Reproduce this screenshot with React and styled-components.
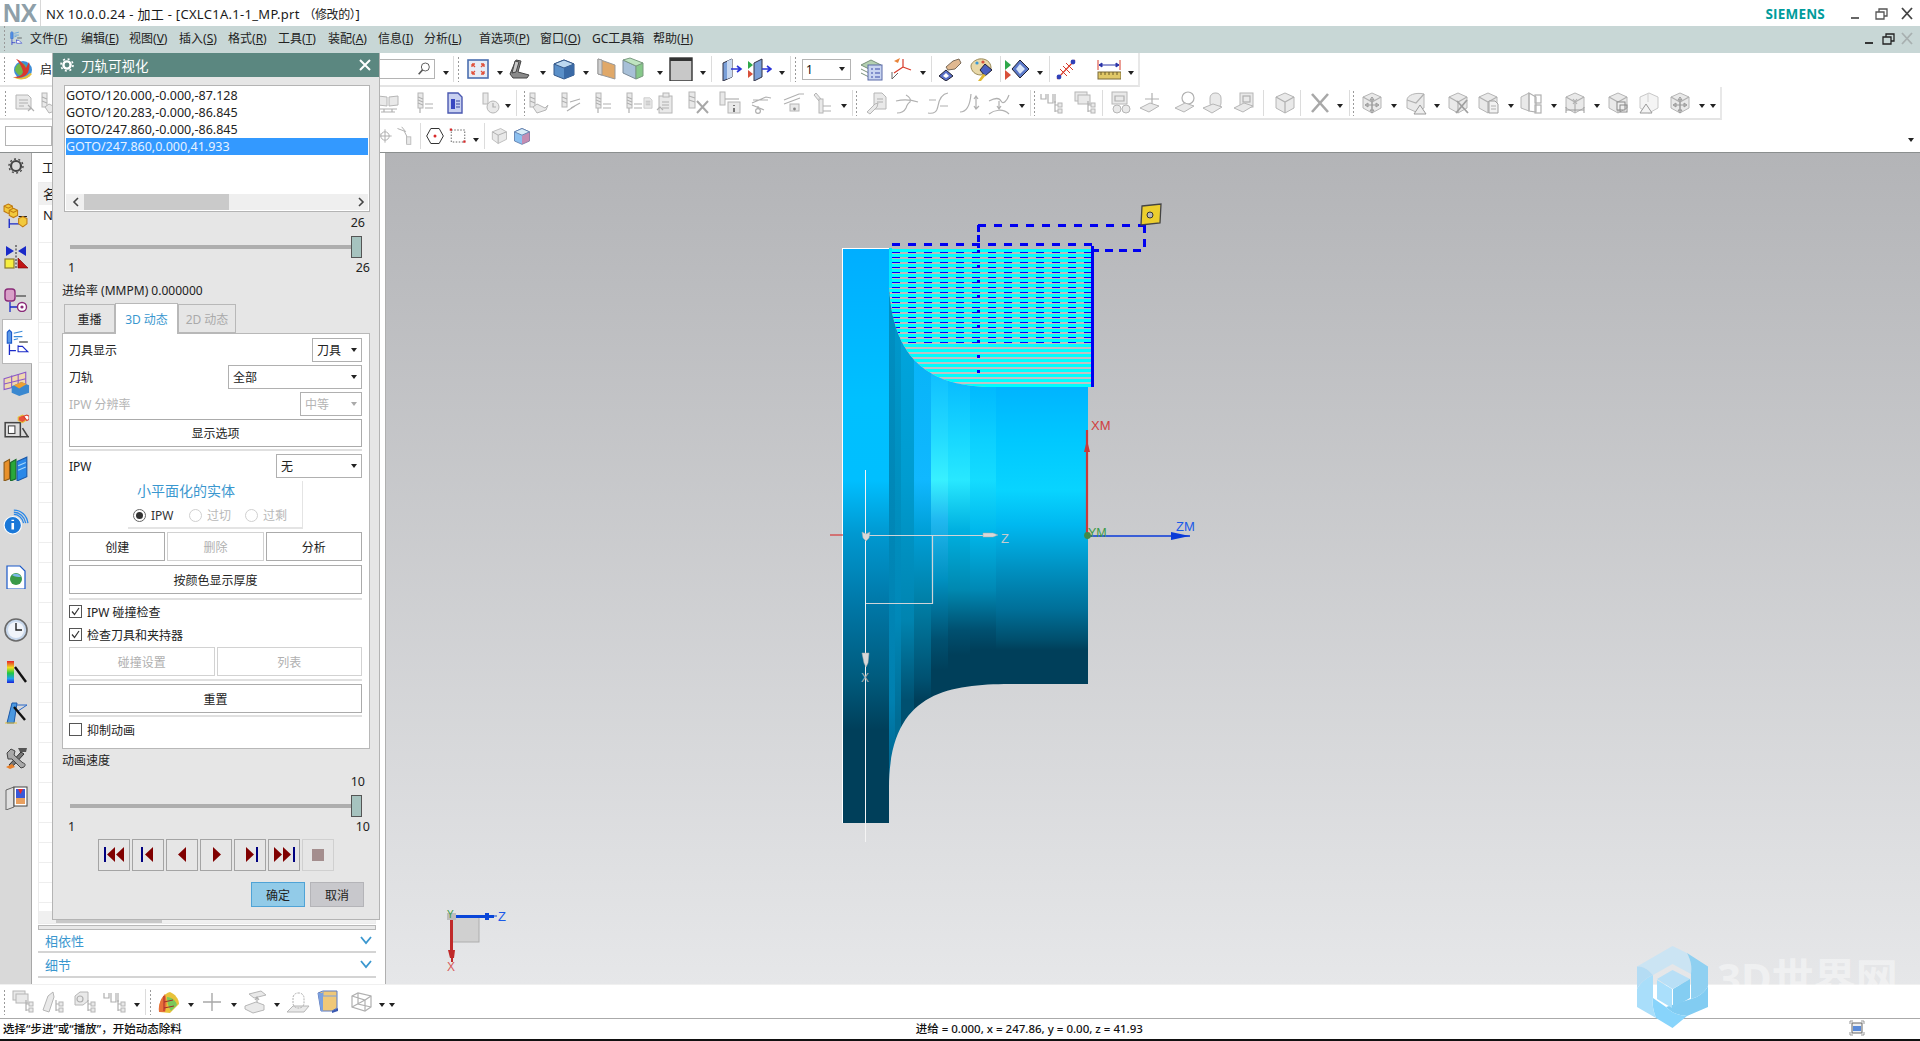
import React from "react";
import styled, { createGlobalStyle } from "styled-components";

const GlobalStyle = createGlobalStyle`
  html, body { margin: 0; padding: 0; background: #fff; overflow: hidden; }
  * { box-sizing: border-box; }
  body { font-family: "Noto Sans", "Noto Sans CJK SC", sans-serif; font-size: 12px; color: #222; }
`;

const Page = styled.div`
  position: relative;
  width: 1920px;
  height: 1041px;
  display: flex;
  flex-direction: column;
  overflow: hidden;
  background: #fff;
`;

/* title bar */
const TitleBar = styled.div`
  height: 26px;
  display: flex;
  align-items: center;
  padding-left: 3px;
  background: #fff;
`;
const Logo = styled.div`
  width: 38px;
  height: 26px;
  font: bold 25px/26px "Liberation Sans", sans-serif;
  color: #8e9fa9;
  letter-spacing: -0.5px;
  border-right: 1px solid #d8d8d8;
`;
const TitleText = styled.div`
  margin-left: 5px;
  font-size: 13px;
  letter-spacing: 0.3px;
  color: #1a1a1a;
  white-space: pre;
`;
const TitleState = styled.span`
  font-size: 12px;
  letter-spacing: -0.4px;
`;
const Siemens = styled.div`
  margin-left: auto;
  margin-right: 25px;
  padding-top: 1px;
  font: bold 13.5px "Open Sans", sans-serif;
  letter-spacing: 0.2px;
  color: #009c9c;
`;
const WinButtons = styled.div`
  display: flex;
  align-items: center;
  gap: ${(p) => p.$gap}px;
  margin-left: ${(p) => p.$auto ? "auto" : "0"};
  margin-right: ${(p) => p.$right}px;
`;

/* menu bar */
const MenuBar = styled.div`
  height: 27px;
  display: flex;
  align-items: center;
  background: #c8d7d6;
  padding: 0 0 3px 3px;
`;
const MenuIcon = styled.span`
  width: 14px;
  margin: 0 7px 0 3px;
  display: flex;
`;
const MenuItem = styled.span`
  width: ${(p) => p.$w}px;
  flex: none;
  font-size: 12px;
  white-space: nowrap;
  color: #222;
  u { text-underline-offset: 1px; }
`;

/* toolbars */
const ToolRow = styled.div`
  height: ${(p) => p.$h}px;
  width: ${(p) => p.$w}px;
  flex: none;
  display: flex;
  align-items: center;
  ${(p) => p.$edge && "border-right: 2px solid #e8e8e8; border-bottom: 2px solid #e4e4e4;"}
`;
const Slot = styled.div`
  flex: none;
  display: flex;
  align-items: center;
  justify-content: center;
  height: 100%;
`;
const Grip = styled.div`
  width: 3px;
  height: 26px;
  background: radial-gradient(circle, #9a9a9a 0.9px, transparent 1.1px) 0 0 / 3px 4px;
`;
const Sep = styled.div`
  width: 1px;
  height: 26px;
  background: #dcdcdc;
`;
const Caret = styled.div`
  width: 0;
  height: 0;
  margin-top: ${(p) => p.$down || 0}px;
  border-left: 3.5px solid transparent;
  border-right: 3.5px solid transparent;
  border-top: 4px solid #222;
`;
const Field = styled.div`
  height: 20px;
  width: ${(p) => p.$w}px;
  border: 1px solid #b4b4b4;
  background: #fff;
  display: flex;
  align-items: center;
  justify-content: space-between;
  padding: 0 2px 0 3px;
`;
const LayerCombo = styled(Field)`
  height: 21px;
  border-width: 1.5px;
  color: #111;
  padding: 0 5px 0 3px;
`;
const TinyLabel = styled.span`
  font-size: 12px;
  white-space: nowrap;
`;

const GroundLine = styled.div`
  height: 1px;
  flex: none;
  background: #8b8f8f;
`;

/* work area */
const Work = styled.div`
  flex: 1;
  min-height: 0;
  display: flex;
`;
const Rail = styled.div`
  width: 32px;
  flex: none;
  background: #d9d9d9;
  border-right: 1px solid #a8a8a8;
  display: flex;
  flex-direction: column;
  align-items: center;
  padding-top: 1px;
`;
const RailTab = styled.div`
  height: ${(p) => p.$h}px;
  width: ${(p) => (p.$active ? 30 : 31)}px;
  margin-left: ${(p) => (p.$active ? 2 : 0)}px;
  margin-top: ${(p) => p.$mt || 0}px;
  flex: none;
  display: flex;
  align-items: center;
  justify-content: center;
  background: ${(p) => (p.$active ? "#fff" : "transparent")};
  ${(p) => p.$active && "border: 1px solid #b8b8b8; border-right: none;"}
`;
const Nav = styled.div`
  width: 354px;
  flex: none;
  background: #fff;
  border-right: 1px solid #b0b0b0;
  display: flex;
  flex-direction: column;
  padding: 0 9px 6px 6px;
`;
const NavHead = styled.div`
  height: 29px;
  padding: 4px 0 0 4px;
  font-size: 13px;
`;
const NavTable = styled.div`
  flex: 1;
  min-height: 0;
  border: 1px solid #ececec;
  display: flex;
  flex-direction: column;
  background: repeating-linear-gradient(#fff 0 19px, #eeeeee 19px 20px);
`;
const NavColumn = styled.div`
  height: 22px;
  background: #f0f0f0;
  padding-left: 4px;
  font-size: 13px;
  line-height: 22px;
`;
const NavRow = styled.div`
  height: 20px;
  padding-left: 4px;
  font-size: 13px;
  line-height: 20px;
  background: #fff;
`;
const NavScroll = styled.div`
  margin-top: auto;
  height: 12px;
  background: #f0f0f0;
  display: flex;
  align-items: flex-end;
`;
const NavThumb = styled.div`
  width: 106px;
  height: 3px;
  margin-left: 17px;
  background: #c8c8c8;
`;
const NavDivider = styled.div`
  height: 5px;
  margin-top: 1px;
  border: 1px solid #b8b8b8;
  background: #e8e8e8;
`;
const Accordion = styled.div`
  height: ${(p) => p.$h}px;
  display: flex;
  align-items: center;
  justify-content: space-between;
  padding: 0 4px 0 7px;
  font-size: 13px;
  color: #3a97cf;
  border-bottom: 2px solid #d4d4d4;
`;

const Viewport = styled.div`
  position: relative;
  flex: 1;
  min-width: 0;
  background: linear-gradient(#b3b4b7, #e6e7e9);
`;
const Scene = styled.svg`
  display: block;
  width: 100%;
  height: 100%;
`;

const BottomBar = styled(ToolRow)`
  width: 100%;
  background: #fff;
  border-top: 1px solid #f0f0f0;
`;
const StatusBar = styled.div`
  height: 23px;
  flex: none;
  border-top: 1px solid #aaa;
  border-bottom: 2px solid #111;
  display: flex;
  align-items: center;
  padding: 0 0 2px 3px;
  font-size: 11.5px;
  font-weight: 500;
  color: #111;
`;
const StatusCenter = styled.span`
  margin-left: 734px;
  white-space: pre;
`;
const StatusIcon = styled.span`
  margin-left: auto;
  margin-right: 55px;
  display: flex;
`;

/* dialog */
const Dialog = styled.div`
  position: absolute;
  left: 52px;
  top: 53px;
  width: 328px;
  height: 867px;
  background: #e6e6e6;
  border: 1px solid #b4b4b4;
  border-top: none;
  display: flex;
  flex-direction: column;
`;
const DialogTitle = styled.div`
  height: 24px;
  flex: none;
  background: #5b8780;
  display: flex;
  align-items: center;
  padding: 0 8px 0 7px;
  color: #fff;
  font-size: 13.5px;
  gap: 7px;
`;
const DialogClose = styled.span`
  margin-left: auto;
  display: flex;
`;
const DialogBody = styled.div`
  padding: 8px 9px 0 9px;
  flex: 1;
  display: flex;
  flex-direction: column;
`;
const ListBox = styled.div`
  margin-left: 2px;
  width: 306px;
  height: 127px;
  flex: none;
  border: 1px solid #b4b4b4;
  background: #fff;
  padding: 1px 1px 1px;
  display: flex;
  flex-direction: column;
`;
const ListLine = styled.div`
  height: 17px;
  line-height: 17px;
  font-size: 12.5px;
  white-space: nowrap;
  color: ${(p) => (p.$sel ? "#e8f2ff" : "#222")};
  background: ${(p) => (p.$sel ? "#3399ff" : "transparent")};
`;
const HScroll = styled.div`
  margin-top: auto;
  height: 16px;
  background: #efefef;
  display: flex;
  align-items: center;
  justify-content: space-between;
  padding: 0 3px 0 6px;
  position: relative;
`;
const HThumb = styled.div`
  position: absolute;
  left: 18px;
  top: 0;
  bottom: 0;
  width: 145px;
  background: #cacaca;
`;
const SliderValue = styled.div`
  margin-top: ${(p) => p.$mt}px;
  height: 16px;
  line-height: 16px;
  text-align: right;
  padding-right: 5px;
  font-size: 12.5px;
`;
const SliderArea = styled.div`
  position: relative;
  margin: 5px 8px 0 8px;
  height: 22px;
  display: flex;
  align-items: center;
`;
const SliderTrack = styled.div`
  width: 100%;
  height: 4px;
  background: #aeaeae;
`;
const SliderThumb = styled.div`
  position: absolute;
  right: 0;
  top: 0;
  width: 11px;
  height: 22px;
  background: #a6c3bf;
  border: 1px solid #555;
`;
const SliderEnds = styled.div`
  margin-top: 2px;
  height: 16px;
  line-height: 16px;
  display: flex;
  justify-content: space-between;
  padding-left: 6px;
  font-size: 12.5px;
`;
const Caption = styled.div`
  margin-top: ${(p) => p.$mt}px;
  height: 16px;
  line-height: 16px;
  font-size: 12px;
  white-space: nowrap;
`;
const Tabs = styled.div`
  margin-top: 5px;
  margin-left: 2px;
  height: 30px;
  display: flex;
  align-items: flex-end;
  position: relative;
  z-index: 1;
  margin-bottom: -1px;
`;
const Tab = styled.div`
  width: ${(p) => p.$w}px;
  height: ${(p) => (p.$active ? 31 : 29)}px;
  margin-bottom: ${(p) => (p.$active ? 0 : 1)}px;
  display: flex;
  align-items: center;
  justify-content: center;
  font-size: 12px;
  border: 1px solid #b8b8b8;
  ${(p) => (p.$active ? "border-bottom: none; background: #fff; color: #3a97cf;" : "background: #e6e6e6;")}
  ${(p) => p.$off && "color: #aaa;"}
`;
const TabPanel = styled.div`
  height: 416px;
  flex: none;
  background: #fff;
  border: 1px solid #b8b8b8;
  padding: 4px 7px 0 6px;
  display: flex;
  flex-direction: column;
`;
const FormRow = styled.div`
  height: 24px;
  flex: none;
  margin-top: ${(p) => p.$mt || 0}px;
  display: flex;
  align-items: center;
  justify-content: space-between;
  font-size: 12px;
  color: ${(p) => (p.$off ? "#b4b4b4" : "#222")};
`;
const Select = styled.div`
  width: ${(p) => p.$w}px;
  height: 24px;
  border: 1px solid #b0b0b0;
  background: #fff;
  display: flex;
  align-items: center;
  justify-content: space-between;
  padding: 0 4px;
  font-size: 12px;
  color: ${(p) => (p.$off ? "#b4b4b4" : "#222")};
`;
const SelectCaret = styled.span`
  width: 0;
  height: 0;
  border-left: 3.5px solid transparent;
  border-right: 3.5px solid transparent;
  border-top: 4px solid ${(p) => (p.$off ? "#aaa" : "#222")};
`;
const WideButton = styled.div`
  flex: ${(p) => (p.$wide ? "1" : "none")};
  height: ${(p) => p.$h || 29}px;
  margin-top: ${(p) => p.$mt || 0}px;
  display: flex;
  align-items: center;
  justify-content: center;
  font-size: 12px;
  background: #fff;
  border: 1px solid ${(p) => (p.$off ? "#d2d2d2" : "#ababab")};
  color: ${(p) => (p.$off ? "#b0b0b0" : "#222")};
`;
const Rule = styled.div`
  height: 2px;
  flex: none;
  margin-top: ${(p) => p.$mt}px;
  background: #e0e0e0;
`;
const ButtonRow = styled.div`
  display: flex;
  flex: none;
  gap: 2px;
  margin-top: ${(p) => p.$mt || 0}px;
`;
const Facet = styled.div`
  margin: 3px 0 3px 59px;
  width: 175px;
  height: 48px;
  flex: none;
  border-right: 1px solid #e4e4e4;
  border-bottom: 2px solid #e4e4e4;
  display: flex;
  flex-direction: column;
  align-items: flex-start;
`;
const FacetTitle = styled.div`
  height: 19px;
  line-height: 19px;
  margin-left: 9px;
  font-size: 14px;
  white-space: nowrap;
  color: #3a97cf;
`;
const RadioRow = styled.div`
  margin: 6px 0 0 5px;
  display: flex;
`;
const RadioItem = styled.div`
  width: 56px;
  display: flex;
  align-items: center;
  gap: 5px;
  font-size: 12px;
  white-space: nowrap;
  color: ${(p) => (p.$off ? "#b8b8b8" : "#333")};
`;
const RadioDot = styled.span`
  width: 13px;
  height: 13px;
  flex: none;
  border-radius: 50%;
  border: 1px solid ${(p) => (p.$off ? "#d0d0d0" : "#666")};
  display: flex;
  align-items: center;
  justify-content: center;
  &::after {
    content: "";
    width: 7px;
    height: 7px;
    border-radius: 50%;
    background: ${(p) => (p.$off ? "transparent" : "#333")};
  }
`;
const CheckRow = styled.div`
  height: 23px;
  flex: none;
  margin-top: ${(p) => p.$mt || 0}px;
  display: flex;
  align-items: center;
  gap: 5px;
  font-size: 12px;
`;
const CheckBox = styled.span`
  width: 13px;
  height: 13px;
  border: 1px solid #555;
  background: #fff;
  display: flex;
`;
const Transport = styled.div`
  margin: 4px 0 0 36px;
  display: flex;
  gap: 2px;
`;
const TransportBtn = styled.div`
  width: 32px;
  height: 32px;
  display: flex;
  align-items: center;
  justify-content: center;
  border: 1px solid ${(p) => (p.$off ? "#d0d0d0" : "#a4a4a4")};
`;
const Footer = styled.div`
  margin-top: 11px;
  padding-right: 6px;
  display: flex;
  justify-content: flex-end;
  gap: 5px;
`;
const FootBtn = styled.div`
  width: 54px;
  height: 25px;
  display: flex;
  align-items: center;
  justify-content: center;
  font-size: 12px;
  background: ${(p) => (p.$primary ? "#92cbe8" : "#c8c8cc")};
  border: 1px solid ${(p) => (p.$primary ? "#4fa3d6" : "#b4b4b8")};
`;

/* watermark */
const Watermark = styled.div`
  position: absolute;
  left: 1637px;
  top: 946px;
  display: flex;
  align-items: flex-start;
  gap: 9px;
  pointer-events: none;
`;
const WatermarkText = styled.div`
  margin-top: 8px;
  font: bold 42px/48px "Noto Sans", "Noto Sans CJK SC", sans-serif;
  color: rgba(255, 255, 255, 0.42);
  white-space: nowrap;
`;

/* icon artwork, 24x24 */
const g = { fill: "#e9e9e9", stroke: "#b6b6b6", strokeWidth: 1 };
const gl = { fill: "none", stroke: "#b0b0b0", strokeWidth: 1.2 };
const cube = <><path d="M12 2l9 4v11l-9 5-9-5V6z" {...g} /><path d="M3 6l9 5 9-5M12 11v11" {...gl} /></>;
const sheet = <path d="M5 3h10l4 4v14H5z" {...g} />;
const tree = <path d="M15 10v11M15 14h3M15 20h3" {...gl} />;
const treeBoxes = <><rect x="18" y="12" width="4" height="4" {...g} /><rect x="18" y="18" width="4" height="4" {...g} /></>;
const yc = { fill: "#f2c93c", stroke: "#c07a10" };

const ICONS = {
  globe: <><circle cx="12" cy="13" r="9" fill="#3f8fd8" /><path d="M6 8c3-3 8-2 9 1s-3 5-4 8-4 1-6-2 0-5 1-7z" fill="#6fb84a" /><path d="M5 2c4 1 8 5 10 9l3-6c1 5 0 10-3 13-4 3-10 4-13 2 5 0 9-1 10-5C11 10 8 5 5 2z" fill="#d8392e" /><path d="M2 20c5 2 12 1 17-4l2 1c-4 6-13 7-19 3z" fill="#e8c23a" /></>,
  search: <><circle cx="14" cy="9" r="6" fill="#fff" stroke="#555" strokeWidth="1.4" /><path d="M10 13l-6 7" stroke="#555" strokeWidth="2.4" /></>,
  fit: <><rect x="2" y="3" width="20" height="18" fill="#e6ecf6" stroke="#4b6fb0" strokeWidth="1.6" /><path d="M6 7l3 3M6 7h3M6 7v3M18 7l-3 3M18 7h-3M18 7v3M6 17l3-3M6 17h3M6 17v-3M18 17l-3-3M18 17h-3M18 17v-3" stroke="#e0503a" strokeWidth="1.3" fill="none" /></>,
  orient: <><path d="M8 3l5 1-3 11 11 3-2 3H5l-3-4z" fill="#8a8a8a" stroke="#444" /><path d="M7 4l4 1-3 10-4 1z" fill="#c8c8c8" stroke="#444" /></>,
  cubeBlue: <><path d="M12 3l10 4v11l-10 4L2 18V7z" fill="#5a8fc8" stroke="#35598a" /><path d="M2 7l10 4 10-4-10-4z" fill="#bcd8f0" stroke="#35598a" /><path d="M12 11v11l10-4V7z" fill="#3a6aa6" /></>,
  wall: <><path d="M3 2l17 6v14L3 17z" fill="#e0a868" stroke="#999" /><path d="M3 2l4 1v15l-4-1z" fill="#d0d0d0" stroke="#999" /></>,
  cubeGreen: <><path d="M2 3l13 6v13L2 16z" fill="#a8c0d8" stroke="#7a8a98" /><path d="M15 9l7-3v13l-7 3z" fill="#86c88a" stroke="#7a9a80" /><path d="M2 3l7-2 13 5-7 3z" fill="#bfe4c0" stroke="#7a9a80" /></>,
  pane: <><rect x="1" y="1" width="22" height="23" fill="#c8c8c8" stroke="#333" strokeWidth="1.4" /><rect x="1" y="1" width="22" height="3" fill="#333" /></>,
  planeA: <><path d="M3 6l9-4v18l-9 4z" fill="#7a9fd8" stroke="#334" /><path d="M7 4l5-2v18l-5 2z" fill="#c8d8f0" /><path d="M11 12h10M17 9l4 3-4 3" stroke="#2a34d8" strokeWidth="1.6" fill="none" /></>,
  planeB: <><path d="M0 4l5 4-5 4z" fill="#2fa84a" /><path d="M0 13l5 4-5 4z" fill="#d8503a" /><path d="M6 6l8-4v18l-8 4z" fill="#7a9fd8" stroke="#334" /><path d="M14 12h9M19 9l4 3-4 3" stroke="#2a34d8" strokeWidth="1.6" fill="none" /></>,
  layers: <><path d="M2 8l10-5 10 5-10 5z" fill="#b4d0b0" stroke="#78907a" /><path d="M2 12l10 5 4-2M2 16l10 5 4-2" stroke="#7a907a" fill="none" /><rect x="9" y="8" width="14" height="15" fill="#c8d4f0" stroke="#5a6aa8" /><path d="M12 12h2M16 12h5M12 16h2M16 16h5M12 20h2M16 20h5" stroke="#3a4aa8" /></>,
  axes: <><path d="M14 10V2M14 10l8 3M14 10l-9 6" stroke="#d83a2a" fill="none" strokeWidth="1.2" /><path d="M5 4l6-3-2 5z" fill="#e8843a" /><path d="M3 22l6-6M3 22v-7" stroke="#666" fill="none" /></>,
  hand: <><path d="M8 10l7-6 6-2 2 4-6 6-7 1z" fill="#e0b890" stroke="#7a6a58" /><path d="M8 13l7 6-7 5-7-5z" fill="#5a70c8" stroke="#223" /><path d="M8 16l3 3-3 2-3-2z" fill="#fff" /></>,
  palette: <><path d="M10 2c7-1 12 3 12 9 0 3-3 3-5 3-3 0-2 4-5 4C6 18 2 14 2 9c0-3 4-6 8-7z" fill="#e8d8a8" stroke="#9a8a58" /><circle cx="8" cy="6" r="1.6" fill="#3a9ad8" /><circle cx="14" cy="5" r="1.6" fill="#d8503a" /><path d="M16 7l7 6-7 6-5-6z" fill="#4a60c0" stroke="#223" /><path d="M9 24l5-7 3 1-5 6z" fill="#e0b830" /></>,
  playDia: <><path d="M0 3l6 5-6 5z" fill="#2fa84a" /><path d="M0 13l6 5-6 5z" fill="#d8503a" /><path d="M15 3l9 9-9 9-8-9z" fill="#5a78c8" stroke="#223" /><path d="M15 7l5 5-5 5-4-5z" fill="#d8e4f8" /></>,
  diag: <><path d="M3 22L21 3" stroke="#d83a2a" strokeWidth="1.1" /><path d="M6 12l7 7M9 9l7 7M12 6l7 7" stroke="#d83a2a" /><circle cx="19" cy="5" r="2.4" fill="#3040b8" /><circle cx="5" cy="20" r="2.4" fill="#3040b8" /></>,
  ruler: <><path d="M1 3v10M23 3v10" stroke="#d83a2a" /><path d="M2 8h20M2 8l3-2v4zM22 8l-3-2v4z" stroke="#2a34a8" fill="#2a34a8" /><rect x="1" y="15" width="23" height="7" fill="#e0c868" stroke="#7a6a38" /><path d="M4 15v3M8 15v3M12 15v3M16 15v3M20 15v3" stroke="#6a5a28" /></>,
  hex: <><path d="M7 3h10l5 9-5 9H7l-5-9z" fill="#fff" stroke="#333" strokeWidth="1.2" /><circle cx="12" cy="12" r="1.8" fill="#d82a2a" /></>,
  dashRect: <><path d="M3 4h18v16H3z" fill="none" stroke="#333" strokeDasharray="2 2" /><rect x="1" y="2" width="3" height="3" fill="#d82a2a" /><rect x="19" y="18" width="3" height="3" fill="#d82a2a" /></>,
  colorCube: <><path d="M12 3l9 4v11l-9 4-9-4V7z" fill="#8cc0f0" stroke="#5a78a8" /><path d="M12 12l9-5v11l-9 4z" fill="#e86a8a" opacity=".6" /><path d="M3 7l9 4 9-4-9-4z" fill="#d8ecf8" stroke="#5a78a8" /></>,
  gDoc: <>{sheet}<path d="M8 9h8M8 12h8M8 15h8" {...gl} /></>,
  gBook: <><path d="M2 5l9 1v9l-9-1zM22 5l-9 1v9l9-1z" {...g} /><path d="M3 18h18M5 21h14M8 18v3M16 18v3" {...gl} /></>,
  gPaper: <><path d="M3 4h12l3 3v11H3z" {...g} /><path d="M6 9h9M6 12h9M6 15h5" {...gl} /><path d="M15 14l6 6M15 20l3-3" {...gl} /></>,
  gDrill: <><rect x="6" y="2" width="5" height="15" {...g} /><path d="M6 6l5 2M6 9l5 2M6 12l5 2" {...gl} /><path d="M13 13h8M13 17h8" {...gl} /><path d="M8 17v5" {...gl} /></>,
  gDrillClock: <><rect x="5" y="2" width="5" height="11" {...g} /><circle cx="15" cy="16" r="6" {...g} /><path d="M15 12v4h3" {...gl} /></>,
  docBlue: <><path d="M5 2h10l4 4v16H5z" fill="#c8d0f0" stroke="#4a58b0" strokeWidth="1.4" /><path d="M8 8h4v10H8z" fill="#3a48c0" /><path d="M13 10h4M13 13h4M13 16h4" stroke="#3a48a0" /></>,
  gWrench: <><rect x="3" y="2" width="5" height="14" {...g} /><path d="M3 6l5 2M3 10l5 2" {...gl} /><path d="M10 13l8 4 3-3-2 5-9 3-4-6z" {...g} /></>,
  gArrowTool: <><rect x="3" y="2" width="5" height="14" {...g} /><path d="M3 6l5 2M3 10l5 2" {...gl} /><path d="M11 11l10-3M12 17l9-5M8 20l8-5" {...gl} /></>,
  gClipDoc: <><rect x="4" y="5" width="13" height="17" {...g} /><rect x="8" y="2" width="6" height="4" {...g} /><path d="M7 11h7M7 14h7M7 17h7" {...gl} /><path d="M2 19l3-3 3 3" {...gl} /></>,
  gDrillX: <><rect x="2" y="1" width="6" height="16" {...g} /><path d="M2 5l6 2M2 9l6 2" {...gl} /><path d="M10 10l11 12M21 10L10 22" stroke="#a8a8a8" strokeWidth="2" /></>,
  gInfo: <><rect x="2" y="1" width="5" height="13" {...g} /><path d="M7 8h14" {...gl} /><rect x="10" y="11" width="12" height="11" {...g} /><path d="M16 14v1M16 17v4" stroke="#777" strokeWidth="2" /></>,
  gScissors: <><path d="M4 12l14-6 5 1M4 14l12 5M5 9h15" {...gl} /><circle cx="10" cy="20" r="2.4" {...gl} /><path d="M10 15v3" {...gl} /></>,
  gPress: <><path d="M3 9l15-6h5M3 13l16-6" {...gl} /><rect x="9" y="13" width="9" height="7" {...g} /><circle cx="13.5" cy="18" r="1.4" fill="#888" /></>,
  gMill: <><path d="M6 2l5 6-2 2-5-6z" {...g} /><rect x="9" y="8" width="4" height="14" {...g} /><path d="M13 15h8M13 20h8" {...gl} /></>,
  gDocWrench: <><path d="M9 2h8l4 4v12H9z" {...g} /><path d="M2 21l8-8 3-1-1 4-7 7z" {...g} /><path d="M12 8h6M12 11h6" {...gl} /></>,
  gCurveA: <path d="M1 10c8-2 16-1 22 1M2 22c5 0 8-3 9-5 1-3 2-5 4-6 1-2 0-5-4-7" {...gl} />,
  gCurveB: <><path d="M2 22c6 1 9-1 10-7s4-12 10-13" {...gl} /><path d="M3 9h7M14 15h8" {...gl} /></>,
  gCurveC: <><path d="M2 21c7 0 10-6 11-18" {...gl} /><path d="M18 6v11M16 8l2-3 2 3M21 15l-3 3-2-3" {...gl} /></>,
  gCurveD: <><path d="M2 10c6-3 10-4 12 0s6 0 8-6" {...gl} /><path d="M2 23c5-4 14-6 20 0" {...gl} /><path d="M12 10v7M10 15l2 3 2-3" {...gl} /></>,
  gWave: <><path d="M1 3v5h5V3M8 3v9h5V3M15 3v9" {...gl} />{tree}{treeBoxes}</>,
  gDocsTree: <><rect x="2" y="1" width="12" height="9" {...g} /><rect x="5" y="4" width="12" height="9" {...g} />{tree}{treeBoxes}</>,
  gToolTree: <><path d="M2 20l5-14 5-4 1 5-5 15z" {...g} />{tree}{treeBoxes}</>,
  gBoxTree: <><path d="M2 6l5-4h8v9l-5 4H2z" {...g} /><circle cx="7" cy="9" r="3" {...gl} />{tree}{treeBoxes}</>,
  gBino: <><rect x="4" y="1" width="15" height="12" {...g} /><circle cx="9" cy="18" r="4" {...g} /><circle cx="18" cy="18" r="4" {...g} /><path d="M7 5h9v5H7z" {...gl} /></>,
  gPlus: <><path d="M14 2v14M7 8h14" {...gl} /><path d="M2 17l10-5 9 3-10 6z" {...g} /></>,
  gCircleTag: <><circle cx="15" cy="7" r="6" {...gl} /><path d="M2 17l10-5 9 3-10 6z" {...g} /></>,
  gCyl: <><rect x="9" y="2" width="11" height="15" rx="5" {...g} /><path d="M2 17l10-4 9 3-10 6z" {...g} /></>,
  gBoxTag: <><rect x="8" y="2" width="13" height="14" {...g} /><rect x="11" y="5" width="7" height="6" {...gl} /><path d="M2 17l10-5 9 3-10 6z" {...g} /></>,
  gCube: cube,
  gX: <path d="M4 3l16 18M20 3L4 21" stroke="#a8a8a8" strokeWidth="2.6" />,
  gCubeMove: <>{cube}<path d="M12 8v12M6 14h12M12 6l-2 3h4zM12 22l-2-3h4zM5 14l3-2v4zM19 14l-3-2v4z" fill="#d8d8d8" stroke="#9a9a9a" /></>,
  gCubeTri: <><path d="M3 9c0-5 9-8 17-6v14l-8 4-9-4z" {...g} /><path d="M3 9l9 3 8-9" {...gl} /><path d="M16 14l6 9H10z" fill="#eee" stroke="#9a9a9a" /></>,
  gCubeX: <>{cube}<path d="M11 10l11 12M21 9L10 22" stroke="#a0a0a0" strokeWidth="1.8" /></>,
  gCubeDoc: <>{cube}<path d="M13 10h6l3 3v9h-9z" fill="#f2f2f2" stroke="#a0a0a0" /><path d="M15 15h5M15 18h5" {...gl} /></>,
  gCubeSplit: <><path d="M2 6l8-4v18l-8-3z" {...g} /><path d="M10 2l7 4v15l-7-1z" {...gl} /><rect x="16" y="4" width="6" height="8" {...gl} /><rect x="16" y="14" width="6" height="8" {...gl} /></>,
  gCubeDim: <>{cube}<path d="M3 19h18M3 16v6M21 16v6" stroke="#9a9a9a" /><path d="M10 8l4 5M14 8l-4 5" {...gl} /></>,
  gCubeCrop: <>{cube}<rect x="11" y="11" width="8" height="8" fill="#eee" stroke="#888" /><rect x="14" y="14" width="7" height="7" fill="none" stroke="#888" /></>,
  gCubeThin: <><path d="M12 2l9 4v11l-9 5-9-5V6z" fill="#f4f4f4" stroke="#c8c8c8" /><path d="M11 3v8" stroke="#d0d0d0" /><path d="M9 13l6 9H3z" fill="#f4f4f4" stroke="#9a9a9a" /></>,
  gPlaneUp: <><path d="M6 4l12-3 5 4-12 3z" {...g} /><path d="M14 8v6M12 10l2-3 2 3" {...gl} /><path d="M2 16l11-4 8 3v5l-11 3-8-4z" {...g} /></>,
  gCylPlate: <><path d="M1 22l6-6h16l-5 6z" {...g} /><rect x="7" y="3" width="11" height="15" rx="5" fill="none" stroke="#b0b0b0" strokeDasharray="2 1" /></>,
  gWire: <><path d="M3 6l6-3 13 3v11l-6 4-13-4z" {...gl} /><path d="M3 6l13 4 6-4M16 10v11M3 17L16 10M9 3v11l13 3" {...gl} /></>,
  gCrossMove: <><path d="M12 4v16M4 12h16" {...gl} /><circle cx="12" cy="12" r="5" {...gl} /><path d="M2 7l5 3" {...gl} /></>,
  gWrist: <><path d="M3 3l8 3 3 6v9M8 1l5 6" {...gl} /><rect x="14" y="13" width="5" height="9" {...g} /></>,
  gBoxLid: <><path d="M4 7l10-4 7 4v9l-10 5-7-5z" {...g} /><path d="M4 7l7 4 10-4M11 11v10" {...gl} /></>,
  gCross: <path d="M12 3v18M3 12h18" stroke="#a8a8a8" strokeWidth="1.4" />,
  heat: <><path d="M3 22C2 12 8 3 14 2c5 2 9 7 9 12l-9 9z" fill="#e8c23a" /><path d="M3 22C2 15 5 8 9 4c2 6 2 13 0 18z" fill="#e8703a" /><path d="M11 7c5 0 9 4 10 8l-6 6c-3-5-4-9-4-14z" fill="#7ac85a" /><path d="M8 6v15M8 12l9-2M8 18l10-2" stroke="#a82a2a" /></>,
  block: <><path d="M3 3l5-2h14v17l-5 3H6z" fill="#f0c878" stroke="#5a78c0" /><path d="M3 3h5v18H6z" fill="#7aa0e0" /><path d="M8 1v5h14" stroke="#7aa0e0" fill="none" /><path d="M17 21l6-3v3l-6 2z" fill="#3a58b0" /></>,
  /* left rail */
  rAssy: <><path d="M5 1l4 2v5l-4 2-4-2V3z" {...yc} /><path d="M10 5l4 2v5l-4 2-4-2V7z" {...yc} /><path d="M1 3l4 2 4-2M6 7l4 2 4-2" stroke="#c07a10" fill="none" /><path d="M15 13h8" stroke="#222" /><path d="M6 15v9M6 20h10" stroke="#1a2ac8" strokeWidth="1.3" /><path d="M19 13l4 2v5l-4 3-4-3v-5z" {...yc} /></>,
  rConstraint: <><path d="M2 1l8 5-8 5zM22 1l-8 5 8 5z" fill="#1a2ac8" /><path d="M12 0v24" stroke="#222" strokeDasharray="2 1.5" /><rect x="1" y="14" width="9" height="9" fill="#f6ee40" stroke="#8a7a30" strokeWidth="1.2" /><path d="M14 13v10h10z" fill="#c01414" stroke="#700" strokeWidth=".6" /></>,
  rDb: <><rect x="1" y="1" width="10" height="12" rx="3" fill="#d8a0c8" stroke="#8a2a78" strokeWidth="1.4" /><path d="M12 8h10" stroke="#222" /><path d="M6 14v10M6 19h8" stroke="#1a2ac8" strokeWidth="1.3" /><circle cx="18" cy="19" r="4.5" fill="#fff" stroke="#8a2a78" strokeWidth="1.4" /><circle cx="18" cy="19" r="1.6" fill="#8a2a78" /></>,
  rPath: <><path d="M5 1l2 2v10H3V3z" fill="#5a98e8" stroke="#1a58c8" /><path d="M9 4l8-2M9 7h8M9 10l4-1" stroke="#3a8ad8" /><path d="M14 12h8" stroke="#222" /><path d="M5 14v10M5 20h6" stroke="#1a2ac8" strokeWidth="1.2" /><path d="M13 15v6h9l-5-5h-4z" fill="#fff" stroke="#1a2ac8" /></>,
  rGrid: <><path d="M1 8l20-6v11L1 18z" fill="#f0d8b0" stroke="#8a58c8" /><path d="M1 13l20-5M8 5v11M14 4v10" stroke="#8a58c8" /><path d="M8 15l9-4 7 3v7l-9 3-7-3z" fill="#3a88d0" /><path d="M10 14l7-3 5 2-7 4z" fill="#f0a030" /></>,
  rMachine: <><rect x="2" y="8" width="14" height="13" fill="#e0e0e0" stroke="#444" strokeWidth="1.4" /><rect x="5" y="11" width="6" height="7" fill="#fff" stroke="#444" /><path d="M16 21h8M18 13l5 8" stroke="#444" strokeWidth="1.4" /><path d="M14 3l4-2 3 2v3l-3 2-4-2z" fill="#e8503a" stroke="#e8c23a" /><path d="M19 2l3-1 2 1v3l-2 1z" fill="#fff" stroke="#d83a2a" /></>,
  rBooks: <><path d="M1 7l5-3v18l-5 2z" fill="#e8902a" stroke="#8a5a18" /><path d="M7 7l5-3v18l-5 2z" fill="#2aa83a" stroke="#1a6a28" /><path d="M13 6l9-4v18l-9 4z" fill="#2a88e8" stroke="#1a58a8" /><path d="M14 10l7-3M14 14l7-3" stroke="#a8d8f8" /></>,
  rInfo: <><circle cx="9" cy="15" r="8" fill="#1a78d8" stroke="#fff" /><path d="M9 10v1M9 13v6" stroke="#fff" strokeWidth="2.4" /><path d="M10 5c4 0 8 3 9 8M10 1c7 0 12 5 13 12M10 3c5 0 10 4 11 10" stroke="#2a88e8" fill="none" strokeWidth="1.2" /></>,
  rDocGlobe: <><path d="M3 1h13l5 5v18H3z" fill="#fff" stroke="#1a58c8" strokeWidth="1.2" /><circle cx="12" cy="14" r="6" fill="#3a9a48" /><path d="M8 10c3-2 7-2 9 2-3 0-6 0-9-2z" fill="#7ab8e8" /></>,
  rClock: <><circle cx="12" cy="12" r="11" fill="#c8d8ec" stroke="#6a6a6a" strokeWidth="1.6" /><circle cx="12" cy="12" r="8" fill="#f0f4fa" /><path d="M12 5v7h6" stroke="#222" strokeWidth="1.4" fill="none" /></>,
  rRainbow: <><defs><linearGradient id="rbw" x1="0" y1="0" x2="0" y2="1"><stop offset="0" stopColor="#e8202a" /><stop offset=".3" stopColor="#f0e020" /><stop offset=".55" stopColor="#20c840" /><stop offset=".8" stopColor="#20a0f0" /><stop offset="1" stopColor="#1a20d8" /></linearGradient></defs><rect x="3" y="1" width="7" height="22" fill="url(#rbw)" /><path d="M11 7l11 15" stroke="#111" strokeWidth="2.4" /></>,
  rDrillWand: <><path d="M3 22l5-20h5l-3 20z" fill="#4a98e0" stroke="#1a58a8" /><path d="M12 4h11L14 10" stroke="#2a68c8" fill="none" /><path d="M10 6l11 13" stroke="#111" strokeWidth="2.4" /><path d="M1 22h12" stroke="#e8c23a" /></>,
  rTools: <><path d="M5 20l12-13 3 2L8 22z" fill="#777" stroke="#333" /><path d="M14 3h9l-1 4-6 0z" fill="#555" /><path d="M3 8l4-4 4 2-1 4 9 8c2 0 3 2 1 4l-3 1-9-9-4 0z" fill="#a8a8a8" stroke="#444" /><path d="M2 22l6-3 3 3-5 2z" fill="#e8802a" /></>,
  rDoor: <><path d="M2 4l8-3v20l-8 3z" fill="#e0e0e0" stroke="#666" /><rect x="10" y="1" width="13" height="19" fill="#fff" stroke="#444" /><rect x="12" y="3" width="9" height="9" fill="#3a58d8" /><rect x="12" y="12" width="9" height="6" fill="#e8a060" /><path d="M14 3l2.5 5L19 3" fill="#e82a2a" /></>,
};

const Ico = ({ name, size = 24 }) => (
  <svg width={size} height={size} viewBox="0 0 24 24">{ICONS[name]}</svg>
);

/* places a row of tools at the centres read off the reference */
const WIDTHS = { caret: 7, sep: 1, grip: 3 };
const Tools = ({ from = 0, items }) => {
  let x = from;
  return items.map(([cx, kind, size], i) => {
    const w = WIDTHS[kind] || size || 24;
    const ml = cx - w / 2 - x;
    x = cx + w / 2;
    let inner;
    if (kind === "caret") inner = <Caret $down={7} />;
    else if (kind === "sep") inner = <Sep />;
    else if (kind === "grip") inner = <Grip />;
    else inner = <Ico name={kind} size={w} />;
    return <Slot key={i} style={{ width: w, marginLeft: ml }}>{inner}</Slot>;
  });
};

const ROW1 = [[446, "caret"], [453, "sep"], [458, "grip"], [478, "fit"], [500, "caret"], [520, "orient"], [543, "caret"], [564, "cubeBlue"], [586, "caret"], [607, "wall"], [633, "cubeGreen"], [660, "caret"], [681, "pane"], [703, "caret"], [711, "sep"], [732, "planeA"], [760, "planeB"], [782, "caret"], [790, "sep"], [795, "grip"]];
const ROW1B = [[871, "layers"], [901, "axes"], [923, "caret"], [931, "sep"], [950, "hand"], [981, "palette"], [1000, "sep"], [1017, "playDia"], [1040, "caret"], [1049, "sep"], [1066, "diag"], [1109, "ruler"], [1131, "caret"]];
const ROW2 = [[5, "grip"], [25, "gPaper"], [51, "gWrench"], [388, "gBook"], [424, "gDrill"], [455, "docBlue"], [490, "gDrillClock"], [508, "caret"], [516, "sep"], [524, "grip"], [539, "gWrench"], [571, "gArrowTool"], [602, "gDrill"], [633, "gDrill"], [648, "gDoc", 14], [667, "gClipDoc"], [699, "gDrillX"], [730, "gInfo"], [760, "gScissors"], [793, "gPress"], [822, "gMill"], [844, "caret"], [852, "sep"], [856, "grip"], [877, "gDocWrench"], [907, "gCurveA"], [938, "gCurveB"], [970, "gCurveC"], [999, "gCurveD"], [1022, "caret"], [1030, "sep"], [1034, "grip"], [1052, "gWave"], [1085, "gDocsTree"], [1102, "sep"], [1120, "gBino"], [1150, "gPlus"], [1185, "gCircleTag"], [1213, "gCyl"], [1244, "gBoxTag"], [1263, "sep"], [1285, "gCube"], [1300, "sep"], [1320, "gX"], [1340, "caret"], [1349, "sep"], [1353, "grip"], [1372, "gCubeMove"], [1394, "caret"], [1416, "gCubeTri"], [1437, "caret"], [1458, "gCubeX"], [1488, "gCubeDoc"], [1511, "caret"], [1531, "gCubeSplit"], [1554, "caret"], [1575, "gCubeDim"], [1597, "caret"], [1618, "gCubeCrop"], [1649, "gCubeThin"], [1680, "gCubeMove"], [1702, "caret"], [1713, "caret"]];
const ROW3 = [[385, "gCrossMove", 20], [405, "gWrist", 20], [420, "sep"], [435, "hex", 20], [458, "dashRect", 18], [476, "caret"], [484, "sep"], [499, "gBoxLid", 20], [522, "colorCube", 20], [1911, "caret"]];
const BOTTOM = [[4, "grip"], [23, "gDocsTree"], [53, "gToolTree"], [85, "gBoxTree"], [115, "gWave"], [137, "caret"], [145, "sep"], [150, "grip"], [168, "heat"], [191, "caret"], [212, "gCross"], [234, "caret"], [255, "gPlaneUp"], [277, "caret"], [298, "gCylPlate"], [327, "block"], [361, "gWire"], [382, "caret"], [392, "caret"]];

const MENUS = [["文件", "F", 51], ["编辑", "E", 48], ["视图", "V", 50], ["插入", "S", 49], ["格式", "R", 50], ["工具", "T", 50], ["装配", "A", 50], ["信息", "I", 46], ["分析", "L", 55], ["首选项", "P", 61], ["窗口", "O", 52], ["GC工具箱", "", 61], ["帮助", "H", 50]];

/* name, icon size, gap above */
const RAIL = [["rAssy", 25, 24], ["rConstraint", 24, 16], ["rDb", 24, 17], ["rPath", 26, 6, true], ["rGrid", 26, 6], ["rMachine", 26, 18], ["rBooks", 26, 15], ["rInfo", 26, 28], ["rDocGlobe", 24, 29], ["rClock", 24, 27], ["rRainbow", 24, 16], ["rDrillWand", 24, 15], ["rTools", 24, 18], ["rDoor", 24, 15]];

/* viewport part geometry, page coordinates */
const UPPER = "C892 350 920 387 993 387";
const BODY = `M843 248H889V285${UPPER}H1088V684H1015C950 684 889 690 889 788V823H843Z`;
const CUT = `M889 248H1091V387H993C920 387 892 350 889 285Z`;
const BAND_STOPS = [
  [843, 889, [[248, "#00aeff"], [400, "#00c0ff"], [480, "#00bfff"], [535, "#0098d0"], [603, "#0078a8"], [680, "#005a7c"], [730, "#003f5a"]]],
  [889, 895, [[285, "#0090c4"], [480, "#0088b8"], [620, "#0084b4"], [700, "#0080b0"], [790, "#006088"]]],
  [895, 901, [[320, "#0098cc"], [480, "#0090c0"], [620, "#0088b8"], [720, "#006c94"]]],
  [901, 914, [[340, "#00a4dc"], [480, "#009cd0"], [620, "#0084b0"], [700, "#005070"]]],
  [914, 931, [[360, "#08b4f8"], [480, "#10b8ff"], [530, "#00a0d8"], [600, "#0080a8"], [680, "#005070"], [700, "#003f5a"]]],
  [931, 948, [[375, "#10c0ff"], [440, "#24dcff"], [480, "#38f0ff"], [520, "#20b8f0"], [580, "#0090c0"], [640, "#005070"], [670, "#003f5a"]]],
  [948, 970, [[380, "#08bcff"], [440, "#18d8ff"], [480, "#28e8ff"], [530, "#00b0e0"], [590, "#0088b0"], [630, "#005070"], [655, "#003f5a"]]],
  [970, 996, [[383, "#00b8ff"], [440, "#0cd0ff"], [480, "#14dcff"], [530, "#00b8ec"], [590, "#0088b4"], [630, "#005070"], [650, "#003f5a"]]],
  [996, 1088, [[387, "#00b4ff"], [440, "#00c8ff"], [490, "#08d4ff"], [525, "#00b8f0"], [570, "#0090c0"], [610, "#006f98"], [640, "#004e6c"], [650, "#003f5a"]]],
];
const HATCH = Array.from({ length: 28 }, (_, i) => 249 + i * 5);
const labelFont = "Liberation Sans, sans-serif";

const Part = () => (
  <Scene viewBox="386 153 1534 831">
    <defs>
      <clipPath id="body"><path d={BODY} /></clipPath>
      <clipPath id="cut"><path d={CUT} /></clipPath>
      {BAND_STOPS.map(([a, , stops]) => (
        <linearGradient key={a} id={`band${a}`} gradientUnits="userSpaceOnUse" x1="0" y1="248" x2="0" y2="823">
          {stops.map(([y, c]) => <stop key={y} offset={(y - 248) / 575} stopColor={c} />)}
        </linearGradient>
      ))}
    </defs>
    <g clipPath="url(#body)" shapeRendering="crispEdges">
      {BAND_STOPS.map(([a, b]) => <rect key={a} x={a} y="248" width={b - a} height="575" fill={`url(#band${a})`} />)}
    </g>
    <g clipPath="url(#cut)" shapeRendering="crispEdges">
      {HATCH.map((y) => <rect key={y} x="889" y={y} width="202" height="3" fill="#00ffff" />)}
      {HATCH.filter((y) => y < 340).map((y) => (
        <line key={y} x1="892" x2="1091" y1={y + 3.5} y2={y + 3.5} stroke="#0000ff" strokeDasharray="8 8" />
      ))}
      <rect x="889" y="248" width="3" height="40" fill="#00e8ff" />
    </g>
    <g fill="none" stroke="#0000f0" strokeWidth="3" shapeRendering="crispEdges">
      <path d="M892 244.5H1092" strokeDasharray="8 8" />
      <path d="M978 225H1144" strokeDasharray="8 8" />
      <path d="M978 225V248" strokeDasharray="7 3" />
      <path d="M1144 225V250H1092" strokeDasharray="8 6" />
      <path d="M978 250V373" strokeDasharray="3 12" />
      <path d="M1092 246V387" />
    </g>
    <path d="M1142 206l19-2-1 19-19 2z" fill="#ecce2e" stroke="#444" strokeWidth="1.3" />
    <circle cx="1150" cy="215" r="3" fill="#b8b8b8" stroke="#333" />
    <path d="M842.5 248V823M843 248.5H889" stroke="#fff" fill="none" />
    <path d="M830 535H843" stroke="#d81a1a" />
    <path d="M865.5 470V842" stroke="#f4f4f4" fill="none" />
    <path d="M866 535.5H985M932.5 535.5V603.5H866" stroke="#d0d4d8" fill="none" strokeWidth="1.2" />
    <path d="M983 533h10l5 2-5 2h-10zM862 653h7l-1 10-2 4-2-4zM862 532l4 2 4-2-1 6-3 3-3-3z" fill="#d8d8d8" stroke="#aaa" strokeWidth=".5" />
    <text x="1001" y="543" fontFamily={labelFont} fontSize="13" fill="#c4ccd0">Z</text>
    <text x="861" y="682" fontFamily={labelFont} fontSize="12" fill="#a8b4bc">X</text>
    <path d="M1087 535V430" stroke="#c83a3a" strokeWidth="2.2" />
    <path d="M1084 452l2-8h2l2 8z" fill="#c83a3a" />
    <text x="1091" y="430" fontFamily={labelFont} fontSize="13" fill="#d04040">XM</text>
    <path d="M1088 536H1190" stroke="#0a3ad8" strokeWidth="1.6" />
    <path d="M1171 532l14 3 5 1-5 1-14 3z" fill="#0a3ad8" />
    <text x="1176" y="531" fontFamily={labelFont} fontSize="13" fill="#1a5ae8">ZM</text>
    <text x="1088" y="537" fontFamily={labelFont} fontSize="12.5" fill="#3a9a48">YM</text>
    <circle cx="1087.5" cy="535.5" r="3.4" fill="#3f8a4a" />
    <rect x="452" y="917" width="27" height="25" fill="#d0d0d0" stroke="#aeaeae" />
    <path d="M453 916.5H485" stroke="#0a46d8" strokeWidth="3" />
    <path d="M485 913h4v2h5v3h-5v2h-4z" fill="#0a46d8" />
    <path d="M494 916h3" stroke="#0a46d8" />
    <path d="M451.5 918V950" stroke="#c02a2a" strokeWidth="3" />
    <path d="M448 950h7l-1 8h-1v4h-2v-4h-1z" fill="#c02a2a" />
    <rect x="447" y="913" width="9" height="7" fill="#bcbcbc" />
    <text x="498" y="921" fontFamily={labelFont} fontSize="13" fill="#1a5ae8">Z</text>
    <text x="447" y="971" fontFamily={labelFont} fontSize="12" fill="#d85a5a">X</text>
    <text x="447" y="918" fontFamily={labelFont} fontSize="10" fill="#3a9a48">Y</text>
  </Scene>
);

const Hexagon = () => (
  <svg width="71" height="82" viewBox="0 0 71 82">
    <path d="M35.5 0L50 7c4 8 5 13 4 21L35.5 18 16 29C10 22 5 20 0 20.5z" fill="#cbe4f3" />
    <path d="M50 7l21 13.5V40c-3 6-9 11-17 13V28c1-8 0-13-4-21z" fill="#8fd0f1" />
    <path d="M71 40v21L50 70c-8-1-14-2-21-9l25-8c8-2 14-7 17-13z" fill="#82ccf2" />
    <path d="M50 70L35.5 82 19 72c-3-8-4-14-3-20l13 9c7 7 13 8 21 9z" fill="#88d4fb" />
    <path d="M19 72L0 61V43c3-6 9-11 16-14v23c-1 6 0 12 3 20z" fill="#a9defa" />
    <path d="M0 43V20.5c5-.5 10 1.5 16 8.5-7 3-13 8-16 14z" fill="#b4dcf4" />
    <path d="M35.5 24L53 33 35.5 43 20 33z" fill="#b8dff6" />
    <path d="M20 34l15 9v19l-15-9z" fill="#aadffb" />
    <path d="M36 43l17-10v19l-17 10z" fill="#84cdf2" />
  </svg>
);

const Slider = ({ max, mt }) => (
  <>
    <SliderValue $mt={mt}>{max}</SliderValue>
    <SliderArea><SliderTrack /><SliderThumb /></SliderArea>
    <SliderEnds><span>1</span><span>{max}</span></SliderEnds>
  </>
);
const FormSelect = ({ label, value, w, off, mt }) => (
  <FormRow $off={off} $mt={mt}>
    <span>{label}</span>
    <Select $w={w} $off={off}>{value}<SelectCaret $off={off} /></Select>
  </FormRow>
);
const Check = () => (
  <svg width="11" height="11" viewBox="0 0 11 11"><path d="M2 5.5l2.5 3L9 2" fill="none" stroke="#333" strokeWidth="1.2" /></svg>
);
const Chevron = () => (
  <svg width="12" height="9" viewBox="0 0 12 9"><path d="M1 1l5 6 5-6" fill="none" stroke="#3a97cf" strokeWidth="1.8" /></svg>
);

const N = "#000080", R = "#800000";
const TRANSPORT = [
  [[3, "bar"], [6, "l"], [15, "l"]],
  [[6, "bar"], [10, "l"]],
  [[9, "l"]],
  [[10, "r"]],
  [[9, "r"], [19, "bar"]],
  [[3, "r"], [12, "r"], [22, "bar"]],
];
const TransportIcon = ({ parts }) => (
  <svg width="26" height="18" viewBox="0 0 26 18">
    {parts.map(([x, t], i) =>
      t === "bar" ? <rect key={i} x={x} y="1" width="2" height="15" fill={N} />
        : t === "l" ? <path key={i} d={`M${x} 8.5L${x + 8} 1v15z`} fill={R} />
          : <path key={i} d={`M${x + 8} 8.5L${x} 1v15z`} fill={R} />
    )}
  </svg>
);

const WinGlyph = ({ kind, color }) => {
  const d = { min: "M1 11h8", max: "M1 5h8v7H1zM4 5V2h8v7H9", close: "M2 1l10 11M12 1L2 12" }[kind];
  return <svg width="13" height="13" viewBox="0 0 13 13"><path d={d} fill="none" stroke={color} strokeWidth={kind === "max" ? 1.3 : 1.8} /></svg>;
};

const App = () => (
  <Page>
    <GlobalStyle />
    <TitleBar>
      <Logo>NX</Logo>
      <TitleText>NX 10.0.0.24 - 加工 - [CXLC1A.1-1_MP.prt <TitleState>（修改的）</TitleState>]</TitleText>
      <Siemens>SIEMENS</Siemens>
      <WinButtons $gap={12} $right={7}>
        <WinGlyph kind="min" color="#555" />
        <WinGlyph kind="max" color="#555" />
        <WinGlyph kind="close" color="#444" />
      </WinButtons>
    </TitleBar>

    <MenuBar>
      <Grip />
      <MenuIcon><Ico name="rPath" size={14} /></MenuIcon>
      {MENUS.map(([t, k, w]) => (
        <MenuItem key={t} $w={w}>{t}{k && <>(<u>{k}</u>)</>}</MenuItem>
      ))}
      <WinButtons $auto $gap={5} $right={7}>
        <WinGlyph kind="min" color="#222" />
        <WinGlyph kind="max" color="#222" />
        <WinGlyph kind="close" color="#a8b0b0" />
      </WinButtons>
    </MenuBar>

    <ToolRow $h={34} $w={1140} $edge>
      <Slot style={{ marginLeft: 3 }}><Grip /></Slot>
      <Slot style={{ marginLeft: 5 }}><Ico name="globe" size={24} /></Slot>
      <Slot style={{ marginLeft: 5 }}><TinyLabel>启动</TinyLabel></Slot>
      <Slot style={{ marginLeft: 301 }}>
        <Field $w={70}><span /><Ico name="search" size={16} /></Field>
      </Slot>
      <Tools from={435} items={ROW1} />
      <Slot style={{ marginLeft: 5.5 }}>
        <LayerCombo $w={49}>1<SelectCaret /></LayerCombo>
      </Slot>
      <Tools from={851} items={ROW1B} />
    </ToolRow>
    <ToolRow $h={33} $w={1722} $edge>
      <Tools items={ROW2} />
    </ToolRow>
    <ToolRow $h={32} $w={1920}>
      <Slot style={{ marginLeft: 5 }}><Field $w={47} /></Slot>
      <Tools from={52} items={ROW3} />
    </ToolRow>
    <GroundLine />

    <Work>
      <Rail>
        <RailTab $h={24}><svg width="16" height="16" viewBox="0 0 16 16"><circle cx="8" cy="8" r="5" fill="none" stroke="#444" strokeWidth="2.2" /><circle cx="8" cy="8" r="7" fill="none" stroke="#444" strokeWidth="1.4" strokeDasharray="2 2.4" /></svg></RailTab>
        {RAIL.map(([n, size, mt, active]) => (
          <RailTab key={n} $h={active ? 45 : 26} $mt={mt} $active={active}>
            <Ico name={n} size={size} />
          </RailTab>
        ))}
      </Rail>
      <Nav>
        <NavHead>工</NavHead>
        <NavTable>
          <NavColumn>名</NavColumn>
          <NavRow>N</NavRow>
          <NavScroll><NavThumb /></NavScroll>
        </NavTable>
        <NavDivider />
        <Accordion $h={23}>相依性<Chevron /></Accordion>
        <Accordion $h={25}>细节<Chevron /></Accordion>
      </Nav>
      <Viewport>
        <Part />
      </Viewport>
    </Work>

    <BottomBar $h={34}>
      <Tools items={BOTTOM} />
    </BottomBar>
    <StatusBar>
      <span>选择“步进”或“播放”，开始动态除料</span>
      <StatusCenter>进给 = 0.000, x = 247.86, y = 0.00, z = 41.93</StatusCenter>
      <StatusIcon>
        <svg width="16" height="16" viewBox="0 0 16 16"><path d="M1 4V1h3M12 1h3v3M15 12v3h-3M4 15H1v-3" fill="none" stroke="#999" /><rect x="3" y="3" width="10" height="10" fill="#eee" stroke="#666" /><rect x="4" y="6" width="8" height="5" fill="#5a8ad8" /></svg>
      </StatusIcon>
    </StatusBar>

    <Dialog>
      <DialogTitle>
        <svg width="14" height="14" viewBox="0 0 14 14"><circle cx="7" cy="7" r="3.6" fill="none" stroke="#fff" strokeWidth="2.4" /><circle cx="7" cy="7" r="6" fill="none" stroke="#fff" strokeWidth="1.6" strokeDasharray="2 2.7" /></svg>
        刀轨可视化
        <DialogClose><svg width="12" height="12" viewBox="0 0 12 12"><path d="M1 1l10 10M11 1L1 11" stroke="#fff" strokeWidth="2" /></svg></DialogClose>
      </DialogTitle>
      <DialogBody>
        <ListBox>
          <ListLine>GOTO/120.000,-0.000,-87.128</ListLine>
          <ListLine>GOTO/120.283,-0.000,-86.845</ListLine>
          <ListLine>GOTO/247.860,-0.000,-86.845</ListLine>
          <ListLine $sel>GOTO/247.860,0.000,41.933</ListLine>
          <HScroll>
            <HThumb />
            <svg width="7" height="10" viewBox="0 0 7 10"><path d="M6 1L2 5l4 4" fill="none" stroke="#444" strokeWidth="1.6" /></svg>
            <svg width="7" height="10" viewBox="0 0 7 10"><path d="M1 1l4 4-4 4" fill="none" stroke="#444" strokeWidth="1.6" /></svg>
          </HScroll>
        </ListBox>
        <Slider max="26" mt={3} />
        <Caption $mt={7}>进给率 (MMPM) 0.000000</Caption>
        <Tabs>
          <Tab $w={51}>重播</Tab>
          <Tab $w={63} $active>3D 动态</Tab>
          <Tab $w={58} $off>2D 动态</Tab>
        </Tabs>
        <TabPanel>
          <FormSelect label="刀具显示" value="刀具" w={50} />
          <FormSelect label="刀轨" value="全部" w={134} mt={3} />
          <FormSelect label="IPW 分辨率" value="中等" w={62} off mt={3} />
          <WideButton $mt={3} $h={28}>显示选项</WideButton>
          <Rule $mt={2} />
          <FormSelect label="IPW" value="无" w={86} mt={3} />
          <Facet>
            <FacetTitle>小平面化的实体</FacetTitle>
            <RadioRow>
              <RadioItem><RadioDot />IPW</RadioItem>
              <RadioItem $off><RadioDot $off />过切</RadioItem>
              <RadioItem $off><RadioDot $off />过剩</RadioItem>
            </RadioRow>
          </Facet>
          <ButtonRow>
            <WideButton $wide>创建</WideButton>
            <WideButton $wide $off>删除</WideButton>
            <WideButton $wide>分析</WideButton>
          </ButtonRow>
          <WideButton $mt={4}>按颜色显示厚度</WideButton>
          <Rule $mt={4} />
          <CheckRow><CheckBox><Check /></CheckBox>IPW 碰撞检查</CheckRow>
          <CheckRow><CheckBox><Check /></CheckBox>检查刀具和夹持器</CheckRow>
          <ButtonRow $mt={1}>
            <WideButton $wide $off>碰撞设置</WideButton>
            <WideButton $wide $off>列表</WideButton>
          </ButtonRow>
          <Rule $mt={3} />
          <WideButton $mt={3}>重置</WideButton>
          <Rule $mt={2} />
          <CheckRow $mt={1}><CheckBox />抑制动画</CheckRow>
        </TabPanel>
        <Caption $mt={4}>动画速度</Caption>
        <Slider max="10" mt={5} />
        <Transport>
          {TRANSPORT.map((parts, i) => (
            <TransportBtn key={i}><TransportIcon parts={parts} /></TransportBtn>
          ))}
          <TransportBtn $off>
            <svg width="12" height="12" viewBox="0 0 12 12"><rect width="12" height="12" fill="#a48e8e" /></svg>
          </TransportBtn>
        </Transport>
        <Footer>
          <FootBtn $primary>确定</FootBtn>
          <FootBtn>取消</FootBtn>
        </Footer>
      </DialogBody>
    </Dialog>

    <Watermark>
      <Hexagon />
      <WatermarkText>3D世界网</WatermarkText>
    </Watermark>
  </Page>
);

export default App;
